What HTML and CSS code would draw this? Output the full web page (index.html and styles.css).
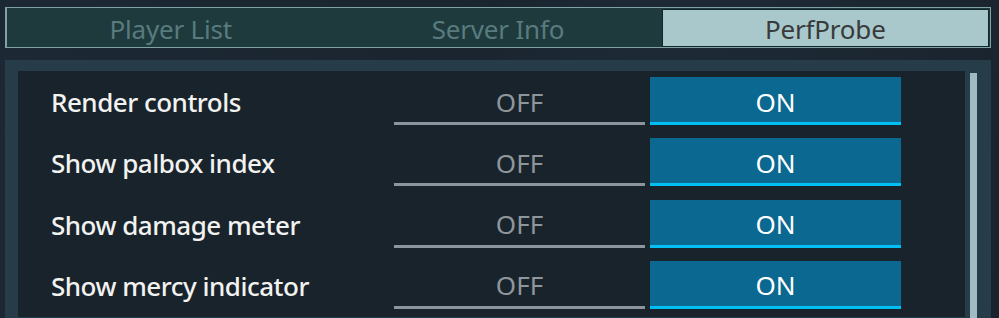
FILE: index.html
```html
<!DOCTYPE html>
<html lang="en">
<head>
    <meta charset="UTF-8">
    <title>PerfProbe</title>
    <link rel="stylesheet" href="styles.css">
</head>
<body>
<div class="tabs">
    <div class="tab">Player List</div>
    <div class="tab">Server Info</div>
    <div class="tab active">PerfProbe</div>
</div>

<div class="panel">
    <div class="options">
        <div class="label">Render controls</div>
        <div class="toggle off">OFF</div>
        <div class="toggle on">ON</div>

        <div class="label">Show palbox index</div>
        <div class="toggle off">OFF</div>
        <div class="toggle on">ON</div>

        <div class="label">Show damage meter</div>
        <div class="toggle off">OFF</div>
        <div class="toggle on">ON</div>

        <div class="label">Show mercy indicator</div>
        <div class="toggle off">OFF</div>
        <div class="toggle on">ON</div>
    </div>
    <div class="scrollbar"></div>
</div>
</body>
</html>
```

FILE: styles.css
```css
html, body {
    margin: 0;
    height: 100%;
    overflow: hidden;
}

body {
    background: linear-gradient(110deg, #1c2833 0%, #1a2530 45%, #1d2a35 60%, #19232d 100%);
    font-family: "Noto Sans", "Open Sans", sans-serif;
    padding: 7px 8px 0 5px;
    box-sizing: border-box;
}

.tabs {
    display: flex;
    height: 41px;
    box-sizing: border-box;
    background: #1f3a3c;
    border-top: 1px solid #7fa2a5;
    border-bottom: 1px solid #7fa2a5;
    border-left: 2px solid #7fa2a5;
    border-right: 1px solid #7fa2a5;
    padding: 1px 1px 0 0;
}

.tab {
    flex: 1;
    display: flex;
    align-items: center;
    justify-content: center;
    font-size: 26px;
    letter-spacing: -0.2px;
    color: #587b7e;
    padding-top: 2px;
}

.tab.active {
    background: #a8c8cb;
    color: #383a3b;
    outline: 1px solid #13262a;
    outline-offset: -1px;
}

.panel {
    display: flex;
    margin-top: 12px;
    height: 260px;
    background: #273c49;
    padding: 11px 14px 0 13px;
    box-sizing: border-box;
}

.options {
    flex: 1;
    background: #19232c;
    padding: 6px 64px 0 33px;
    display: grid;
    grid-template-columns: 1fr 251px 251px;
    grid-auto-rows: 48px;
    column-gap: 5px;
    row-gap: 13.33px;
    margin-bottom: 3px;
}

.label {
    display: flex;
    align-items: center;
    color: #f2f2f0;
    font-size: 26px;
    font-weight: 500;
    letter-spacing: -0.5px;
    padding-top: 2px;
}

.toggle {
    display: flex;
    align-items: center;
    justify-content: center;
    font-size: 26px;
    box-sizing: border-box;
    padding-top: 4px;
}

.toggle.off {
    color: #8f969b;
    border-bottom: 3px solid #8c959b;
}

.toggle.on {
    background: #0a6891;
    color: #ffffff;
    border-bottom: 3px solid #00bff5;
}

.scrollbar {
    width: 7px;
    margin: 2px 0 0 5px;
    background: #9fbcc4;
}
```
